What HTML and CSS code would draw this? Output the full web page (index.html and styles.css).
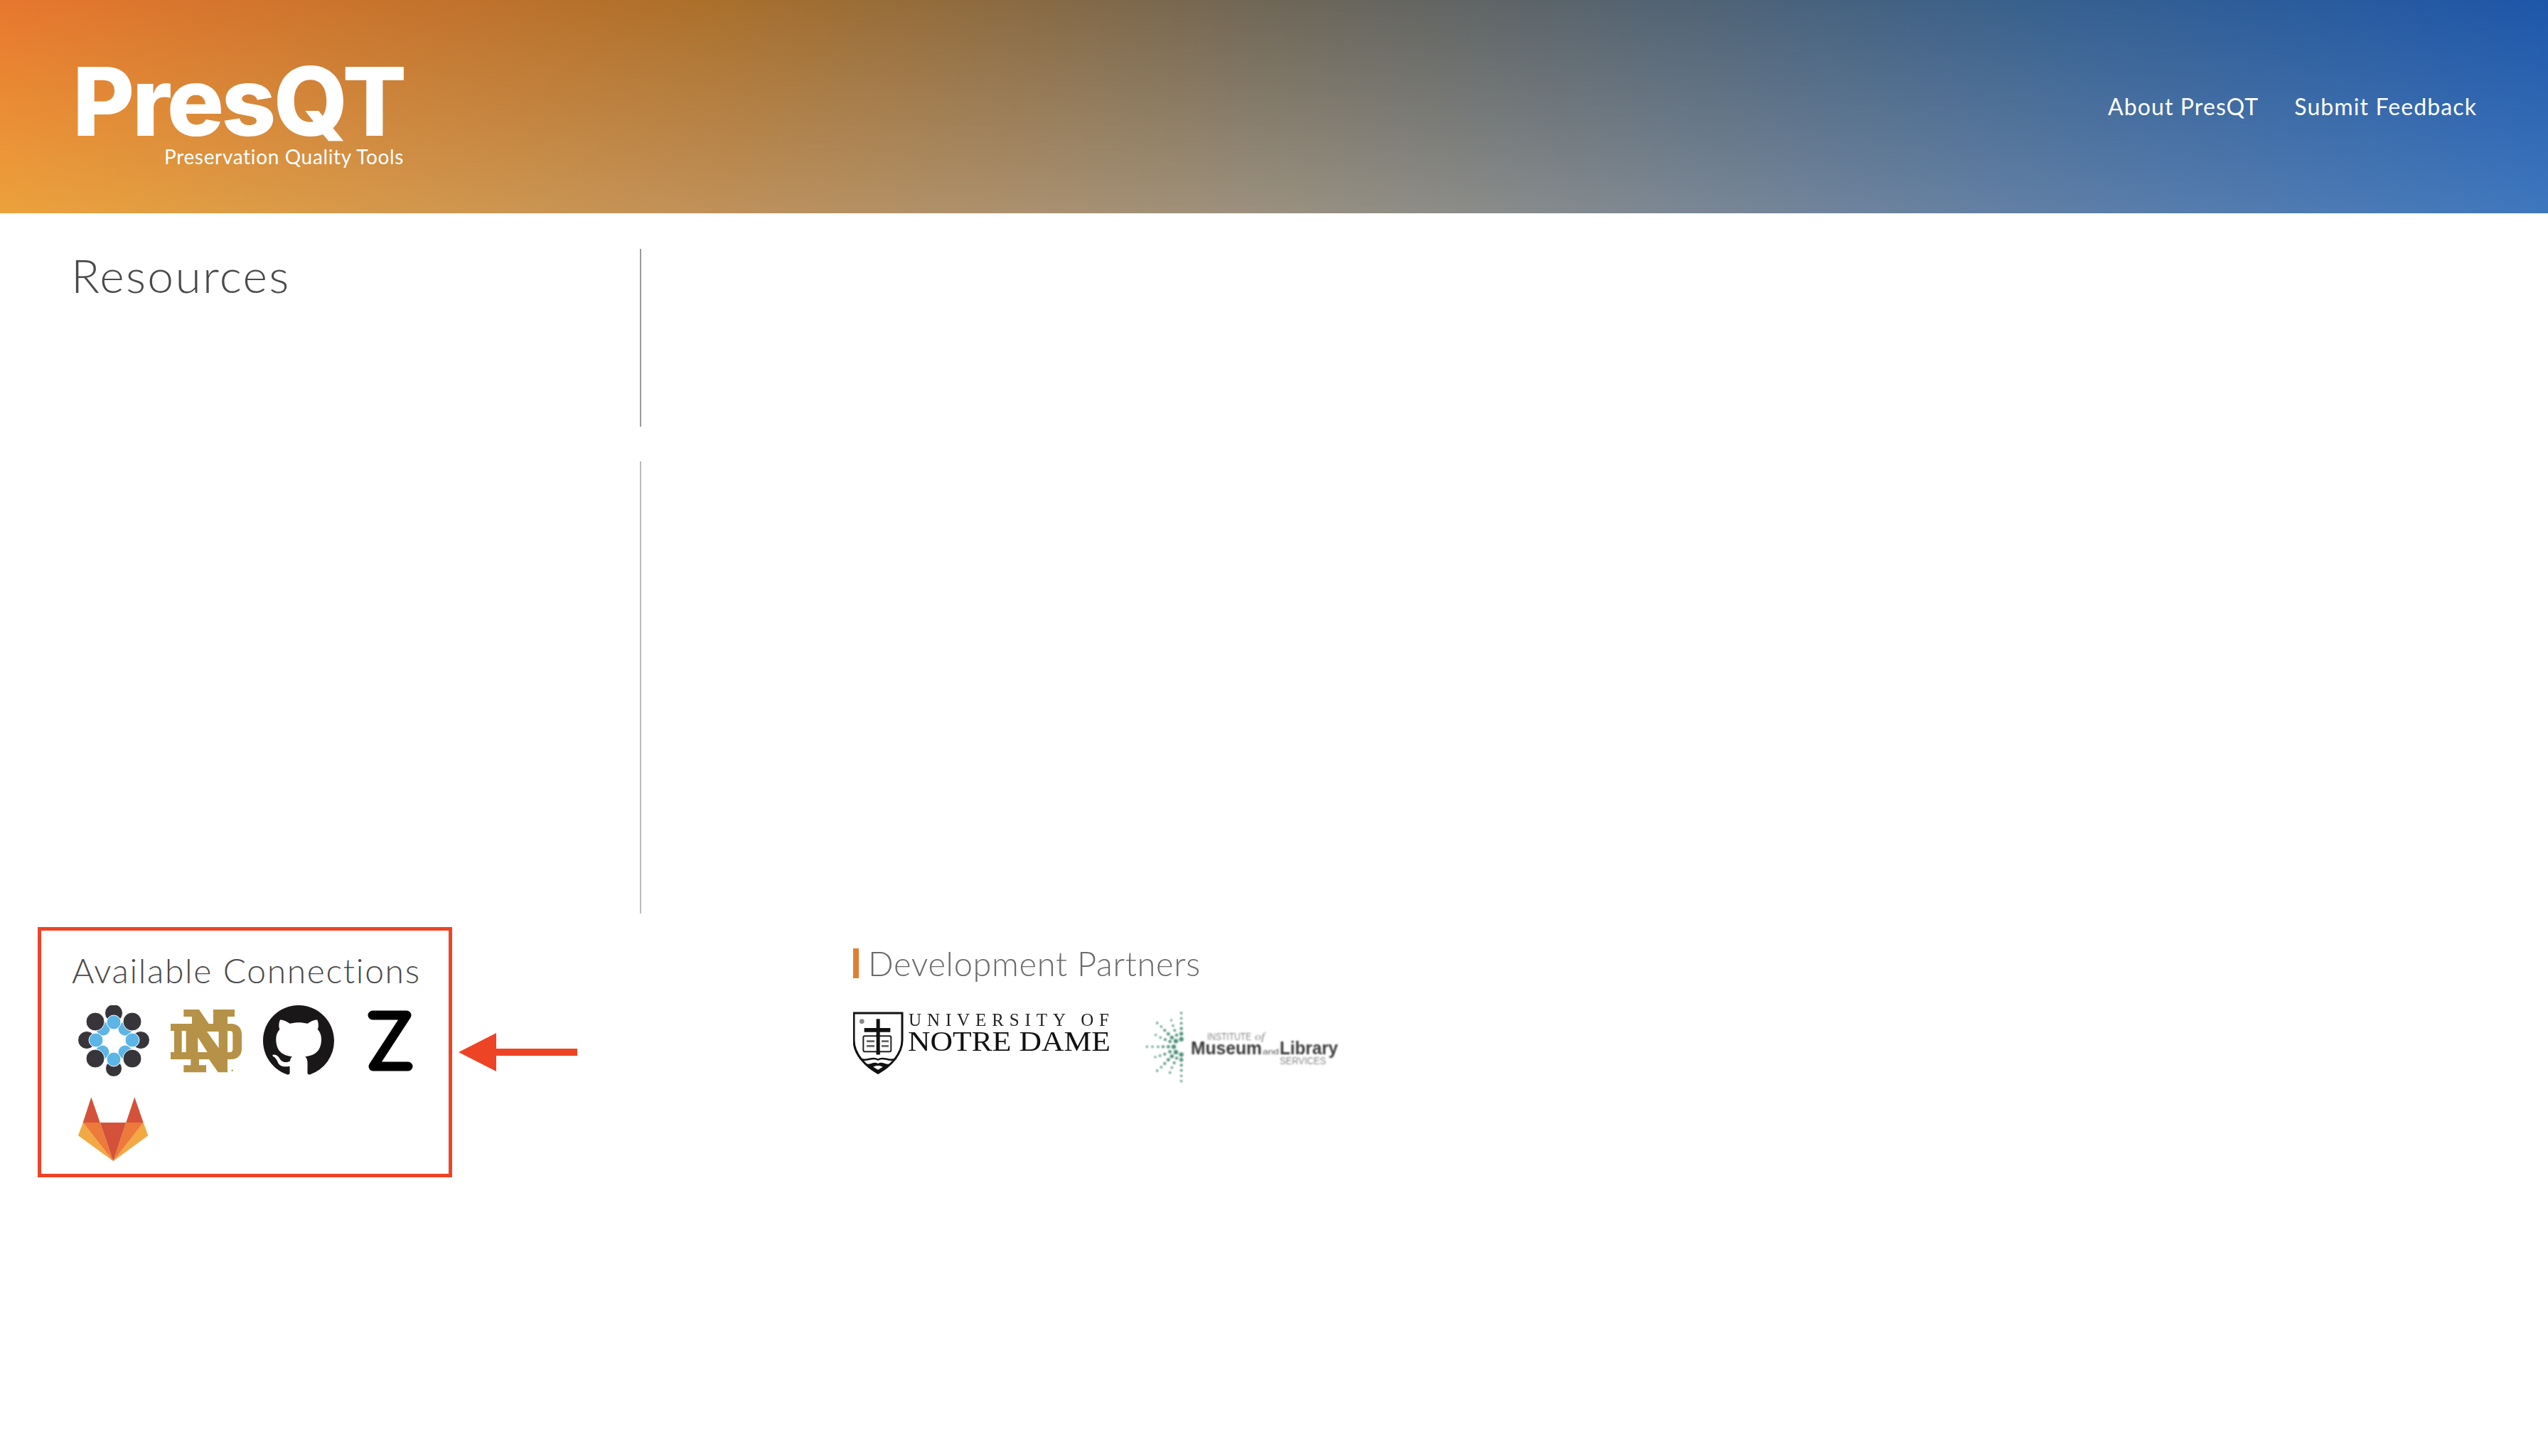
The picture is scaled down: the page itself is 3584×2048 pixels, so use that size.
FILE: index.html
```html
<!DOCTYPE html>
<html>
<head>
    <title>PresQT</title>
    <link rel="stylesheet" href="styles.css">
</head>
<body>
<div class="site-header">
    <div class="brand">
        <div class="brand-name">PresQT</div>
        <div class="brand-sub">Preservation Quality Tools</div>
    </div>
    <div class="nav">
        <a class="nav-link">About PresQT</a>
        <a class="nav-link">Submit Feedback</a>
    </div>
</div>

<div class="pane pane-top">
    <div class="pane-left">
        <h1 class="pane-title">Resources</h1>
    </div>
</div>
<div class="pane pane-mid">
    <div class="pane-left"></div>
</div>

<div class="bottom-row">
    <div class="connections">
        <h2 class="connections-title">Available Connections</h2>
        <div class="conn-icons">
            <!-- osf -->
            <svg class="conn-icon" viewBox="0 0 100 100">
                <g fill="#5cb5e6">
                    <circle cx="35" cy="33" r="9.5"/>
                    <circle cx="66" cy="33" r="9.5"/>
                    <circle cx="34" cy="66" r="9.5"/>
                    <circle cx="66" cy="66" r="9.5"/>
                </g>
                <g fill="#38353a" stroke="#fff" stroke-width="1">
                    <circle cx="50" cy="11" r="12.5"/>
                    <circle cx="24" cy="23" r="13"/>
                    <circle cx="76" cy="23" r="13"/>
                    <circle cx="12" cy="49" r="12.5"/>
                    <circle cx="88" cy="49" r="12.5"/>
                    <circle cx="24" cy="75" r="13"/>
                    <circle cx="76" cy="75" r="13"/>
                    <circle cx="50" cy="89" r="11.5"/>
                </g>
                <g fill="#5cb5e6" stroke="#fff" stroke-width="1">
                    <circle cx="50" cy="24" r="10"/>
                    <circle cx="25" cy="49" r="10"/>
                    <circle cx="76" cy="49" r="10"/>
                    <circle cx="50" cy="76" r="10"/>
                </g>
            </svg>
            <!-- notre dame -->
            <svg class="conn-icon" viewBox="15 -3 300 300">
                <path fill="#b59247" fill-rule="evenodd" d="M70 15H135L176 75H195V45H195V15H285V45H255V75H270C300 75 315 95 315 120V180C315 205 300 225 270 225H255V280H215L177 225H135V250H165V280H70V250H100V225H15V195H30V105H15V75H105V45H70ZM62 105V195H80V105ZM130 132V195H170ZM168 108L218 178V108ZM255 105V195H266C273 195 277 190 277 183V117C277 110 273 105 266 105Z"/>
                <circle cx="275" cy="272" r="3.5" fill="#b59247"/>
            </svg>
            <!-- github -->
            <svg class="conn-icon" viewBox="0 0 16 16">
                <path fill="#1a1718" d="M8 0C3.58 0 0 3.58 0 8c0 3.54 2.29 6.53 5.47 7.59.4.07.55-.17.55-.38 0-.19-.01-.82-.01-1.49-2.01.37-2.53-.49-2.69-.94-.09-.23-.48-.94-.82-1.13-.28-.15-.68-.52-.01-.53.63-.01 1.08.58 1.23.82.72 1.21 1.87.87 2.33.66.07-.52.28-.87.51-1.07-1.78-.2-3.64-.89-3.64-3.95 0-.87.31-1.59.82-2.15-.08-.2-.36-1.02.08-2.12 0 0 .67-.21 2.2.82.64-.18 1.32-.27 2-.27.68 0 1.36.09 2 .27 1.53-1.04 2.2-.82 2.2-.82.44 1.1.16 1.92.08 2.12.51.56.82 1.27.82 2.15 0 3.07-1.87 3.75-3.65 3.95.29.25.54.73.54 1.48 0 1.07-.01 1.93-.01 2.2 0 .21.15.46.55.38A8.013 8.013 0 0016 8c0-4.42-3.58-8-8-8z"/>
            </svg>
            <!-- zenodo -->
            <svg class="conn-icon" viewBox="0 0 100 100">
                <path fill="none" stroke="#000" stroke-width="13" stroke-linecap="round" stroke-linejoin="round" d="M24 14H72L25 86H74"/>
            </svg>
            <!-- gitlab -->
            <svg class="conn-icon" viewBox="0 0 100 100">
                <polygon fill="#d4523a" points="18.3,3.3 6.7,39 30.7,39"/>
                <polygon fill="#d4523a" points="79.3,3.3 67.3,39 91.7,39"/>
                <polygon fill="#f2a843" points="6.7,39 0,57.3 49.3,93.3"/>
                <polygon fill="#f2a843" points="91.7,39 98.3,57.3 49.3,93.3"/>
                <polygon fill="#ed7a3a" points="6.7,39 30.7,39 49.3,93.3"/>
                <polygon fill="#ed7a3a" points="91.7,39 67.3,39 49.3,93.3"/>
                <polygon fill="#d4523a" points="30.7,39 67.3,39 49.3,93.3"/>
            </svg>
        </div>
    </div>

    <svg class="arrow" viewBox="0 0 167 54">
        <polygon fill="#ee4426" points="0,27 53,0 53,22 167,22 167,32 53,32 53,54"/>
    </svg>

    <div class="partners">
        <h2 class="partners-title">Development Partners</h2>
        <div class="partner-logos">
            <!-- notre dame wordmark -->
            <svg class="logo-nd" viewBox="0 0 365 105">
                <g transform="translate(-5 0) scale(.3333)">
                    <path fill="#fff" stroke="#111" stroke-width="9" d="M18 15H222V130C222 190 170 240 120 268C70 240 18 190 18 130Z"/>
                    <path fill="#111" d="M113 40H128V78H172V95H128V190H113V95H62V78H113Z"/>
                    <rect x="58" y="112" width="117" height="66" rx="6" fill="#fff" stroke="#222" stroke-width="6"/>
                    <path fill="#111" d="M113 108H128V190H113Z"/>
                    <path fill="#666" d="M72 130H105V138H72ZM72 150H105V158H72ZM135 130H165V138H135ZM135 150H165V158H135Z"/>
                    <circle cx="52" cy="50" r="10" fill="#888"/>
                    <path fill="none" stroke="#111" stroke-width="7" d="M42 205C70 225 95 195 120 212C145 195 170 225 198 205"/>
                    <path fill="#111" d="M60 225C85 240 100 215 120 228C140 215 155 240 180 225C165 245 140 260 120 268C100 260 75 245 60 225Z"/>
                    <path fill="#fff" d="M100 242C110 235 130 235 140 242L120 254Z"/>
                </g>
                <text class="nd-top" x="78" y="23" textLength="282" lengthAdjust="spacing">UNIVERSITY OF</text>
                <text class="nd-main" x="77" y="58" textLength="285" lengthAdjust="spacingAndGlyphs">NOTRE DAME</text>
            </svg>
            <!-- imls -->
            <svg class="logo-imls" viewBox="0 0 280 105">
                <g transform="scale(.3333)" fill="#4e9078">
                    <circle cx="170" cy="15" r="5"/><circle cx="170" cy="37" r="5"/><circle cx="170" cy="58" r="5.5"/>
                    <circle cx="170" cy="80" r="6.5"/><circle cx="170" cy="102" r="8"/><circle cx="170" cy="125" r="9.5"/>
                    <circle cx="170" cy="190" r="9.5"/><circle cx="170" cy="212" r="8"/><circle cx="170" cy="235" r="6"/>
                    <circle cx="170" cy="257" r="5.5"/><circle cx="170" cy="280" r="5"/><circle cx="170" cy="302" r="5"/>
                    <circle cx="25" cy="157" r="4.5"/><circle cx="48" cy="157" r="4.5"/><circle cx="72" cy="157" r="5"/>
                    <circle cx="93" cy="157" r="6"/><circle cx="115" cy="157" r="7"/><circle cx="138" cy="157" r="9.5"/>
                    <circle cx="68" cy="57" r="5"/><circle cx="85" cy="72" r="5"/><circle cx="100" cy="88" r="6"/>
                    <circle cx="115" cy="103" r="7"/><circle cx="130" cy="118" r="8"/><circle cx="147" cy="133" r="9.5"/>
                    <circle cx="128" cy="45" r="4.5"/><circle cx="135" cy="68" r="5"/><circle cx="142" cy="88" r="5.5"/><circle cx="150" cy="108" r="6.5"/>
                    <circle cx="60" cy="200" r="4.5"/><circle cx="80" cy="195" r="5"/><circle cx="100" cy="188" r="6"/><circle cx="122" cy="178" r="7"/>
                    <circle cx="62" cy="107" r="4.5"/><circle cx="82" cy="118" r="5"/><circle cx="102" cy="127" r="6"/><circle cx="122" cy="135" r="7"/>
                    <circle cx="68" cy="258" r="5"/><circle cx="85" cy="243" r="5"/><circle cx="100" cy="228" r="6"/>
                    <circle cx="115" cy="212" r="7"/><circle cx="130" cy="197" r="8"/><circle cx="147" cy="180" r="9.5"/>
                    <circle cx="122" cy="266" r="5"/><circle cx="130" cy="245" r="5"/><circle cx="140" cy="225" r="6"/><circle cx="150" cy="205" r="6.5"/>
                </g>
                <text class="imls-small" x="93" y="43" textLength="62" lengthAdjust="spacingAndGlyphs">INSTITUTE</text>
                <text class="imls-of" x="160" y="43" textLength="14" lengthAdjust="spacingAndGlyphs">of</text>
                <text class="imls-big" x="70" y="62.5" textLength="100" lengthAdjust="spacingAndGlyphs">Museum</text>
                <text class="imls-and" x="171" y="62.5" textLength="23" lengthAdjust="spacingAndGlyphs">and</text>
                <text class="imls-big" x="195" y="62.5" textLength="82" lengthAdjust="spacingAndGlyphs">Library</text>
                <text class="imls-small" x="195" y="77" textLength="65" lengthAdjust="spacingAndGlyphs">SERVICES</text>
            </svg>
        </div>
    </div>
</div>
</body>
</html>
```

FILE: styles.css
```css
* {
    margin: 0;
    box-sizing: border-box;
}

body {
    background: #fff;
    font-family: "Lato", "Liberation Sans", sans-serif;
    font-weight: 300;
    color: #4a4a4a;
}

/* header: bottom colours on the element, top colours faded in over them */
.site-header {
    position: relative;
    height: 300px;
    display: flex;
    align-items: flex-start;
    justify-content: space-between;
    padding: 0 100px 0 102px;
    background: linear-gradient(to right, #eda23c 0%, #c0915a 28%, #9a9180 50%, #5f7fa8 81%, #3f78bf 100%);
}

.site-header::before {
    content: "";
    position: absolute;
    inset: 0;
    background: linear-gradient(to right, #e7772e 0%, #aa6f2b 28%, #6e6657 50%, #36608f 81%, #1e56a9 100%);
    -webkit-mask-image: linear-gradient(to bottom, #000, transparent);
    mask-image: linear-gradient(to bottom, #000, transparent);
}

.brand {
    position: relative;
    width: 466px;
    margin-top: 82px;
    color: #fff;
    text-align: right;
}

.brand-name {
    font-family: "Inter", "Liberation Sans", sans-serif;
    font-size: 134px;
    font-weight: 800;
    line-height: 121px;
    letter-spacing: -3.6px;
    text-align: left;
}

.brand-sub {
    font-size: 28px;
    font-weight: 400;
    line-height: 34px;
    letter-spacing: .65px;
}

.nav {
    position: relative;
    display: flex;
    gap: 50px;
    margin-top: 130px;
}

.nav-link {
    color: #fff;
    font-size: 32px;
    font-weight: 400;
    line-height: 40px;
    letter-spacing: 1.1px;
}

.pane-top {
    height: 250px;
    margin-top: 50px;
}

.pane-mid {
    height: 636px;
    margin-top: 49px;
}

.pane-left {
    width: 902px;
    height: 100%;
    padding-left: 100px;
    border-right: 2px solid #999;
}

.pane-mid .pane-left {
    border-right-color: #bbb;
}

.pane-title {
    font-size: 66px;
    font-weight: 300;
    line-height: 74px;
    letter-spacing: 2.3px;
}

.bottom-row {
    display: flex;
    align-items: flex-start;
    margin: 19px 0 0 53px;
}

.connections {
    width: 583px;
    height: 352px;
    padding: 28px 0 0 43px;
    border: 5px solid #ee4426;
}

.connections-title {
    font-size: 48px;
    font-weight: 300;
    line-height: 56px;
    letter-spacing: 1.65px;
}

.conn-icons {
    display: flex;
    flex-wrap: wrap;
    gap: 26px 30px;
    margin: 21px 0 0 9px;
}

.conn-icon {
    display: block;
    width: 100px;
    height: 100px;
}

.arrow {
    width: 167px;
    height: 54px;
    margin: 149px 0 0 9px;
}

.partners {
    margin: 30px 0 0 388px;
}

.partners-title {
    height: 42px;
    padding-left: 13px;
    border-left: 8px solid #dd8033;
    color: #6b6b6b;
    font-size: 47px;
    font-weight: 300;
    line-height: 42px;
    letter-spacing: .65px;
    filter: blur(.5px);
}

.partner-logos {
    display: flex;
    gap: 40px;
    margin-top: 44px;
}

.logo-nd {
    width: 365px;
    height: 105px;
    filter: blur(.5px);
}

.logo-imls {
    width: 280px;
    height: 105px;
    filter: blur(.8px);
}

.nd-top {
    font-family: "Liberation Serif", serif;
    font-size: 25px;
    fill: #222;
}

.nd-main {
    font-family: "Liberation Serif", serif;
    font-size: 39px;
    fill: #111;
}

.imls-small {
    font-family: "Liberation Sans", sans-serif;
    font-size: 14px;
    fill: #888;
}

.imls-of {
    font-family: "Liberation Serif", serif;
    font-size: 14px;
    font-style: italic;
    fill: #888;
}

.imls-big {
    font-family: "Liberation Sans", sans-serif;
    font-size: 25px;
    font-weight: 700;
    fill: #3a3a3a;
}

.imls-and {
    font-family: "Liberation Sans", sans-serif;
    font-size: 11px;
    fill: #555;
}
```
